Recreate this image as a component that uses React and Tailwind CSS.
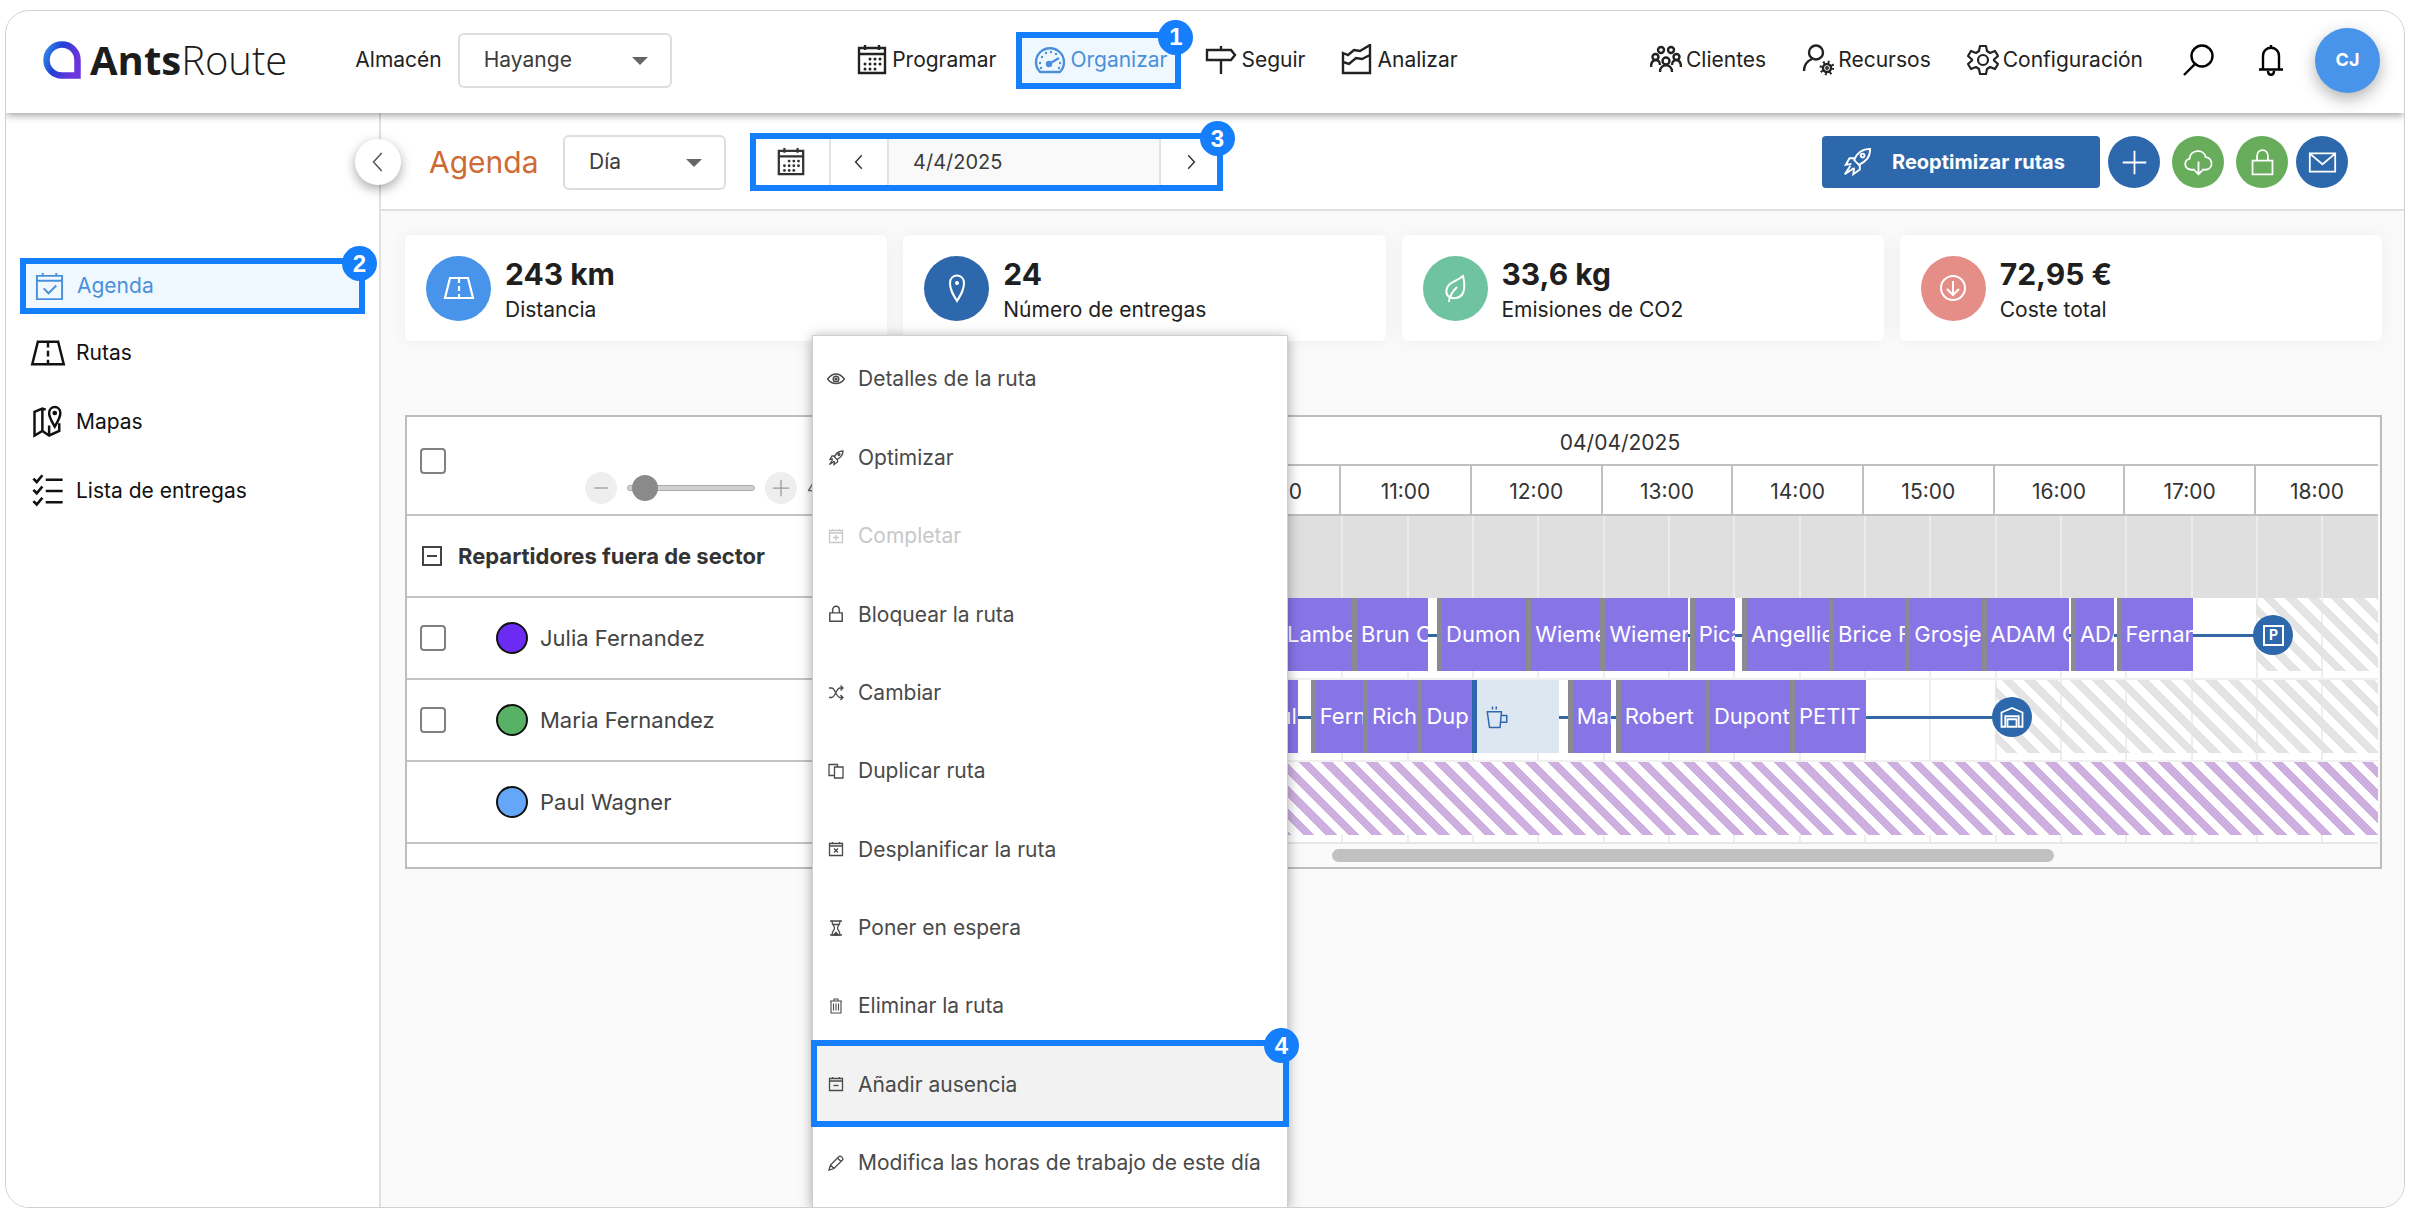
import React, { useState } from 'react'

// Timeline window, in minutes since midnight
const DAY_START = 440
const DAY_END = 1136
const SPAN = DAY_END - DAY_START

const toPercent = (minutes) => `${((minutes - DAY_START) / SPAN) * 100}%`
const toWidth = (from, to) => `${((to - from) / SPAN) * 100}%`

const HOURS = [7, 8, 9, 10, 11, 12, 13, 14, 15, 16, 17, 18]
const HALF_HOURS = Array.from({ length: 23 }, (_, i) => 450 + i * 30)

const JULIA_STOPS = [
  { from: 631, to: 665, label: 'Lambert' },
  { from: 665, to: 700, label: 'Brun C' },
  { from: 704, to: 745, label: 'Dumon' },
  { from: 745, to: 779, label: 'Wiemer' },
  { from: 779, to: 819, label: 'Wiemer' },
  { from: 820, to: 841, label: 'Picard' },
  { from: 844, to: 884, label: 'Angellier' },
  { from: 884, to: 919, label: 'Brice F' },
  { from: 919, to: 954, label: 'Grosjean' },
  { from: 954, to: 994, label: 'ADAM C' },
  { from: 995, to: 1015, label: 'ADAM' },
  { from: 1016, to: 1051, label: 'Fernan' },
]

const MARIA_STOPS = [
  { from: 615, to: 640, label: 'Paul' },
  { from: 646, to: 670, label: 'Fern' },
  { from: 670, to: 695, label: 'Rich' },
  { from: 695, to: 720, label: 'Dup' },
  { from: 720, to: 760, pause: true },
  { from: 764, to: 784, label: 'Mar' },
  { from: 786, to: 827, label: 'Robert' },
  { from: 827, to: 866, label: 'Dupont' },
  { from: 866, to: 901, label: 'PETIT A' },
]

/* ---------- Icons ---------- */

const Icon = ({ className = 'size-8', width = 2, children }) => (
  <svg
    className={`shrink-0 ${className}`}
    viewBox="0 0 32 32"
    fill="none"
    stroke="currentColor"
    strokeWidth={width}
    aria-hidden="true"
  >
    {children}
  </svg>
)

const Dots = ({ points, r = 1.3 }) =>
  points.map(([x, y]) => <circle key={`${x}-${y}`} cx={x} cy={y} r={r} fill="currentColor" stroke="none" />)

const CalendarIcon = (props) => (
  <Icon width={2.4} {...props}>
    <path d="M3 4h26v25H3zM3 10h26M9 1v5M23 1v5" />
    <Dots
      r={1.5}
      points={[
        [14, 15], [19, 15], [24, 15],
        [9, 20], [14, 20], [19, 20], [24, 20],
        [9, 25], [14, 25], [19, 25],
      ]}
    />
  </Icon>
)

const CalendarBase = ({ children, ...props }) => (
  <Icon {...props}>
    <path d="M3 5h26v24H3zM3 10h26M9 2v4M23 2v4" />
    {children}
  </Icon>
)

const GaugeIcon = (props) => (
  <Icon width={2.4} {...props}>
    <path d="M6 28a14 14 0 1 1 20 0z" strokeLinejoin="round" />
    <circle cx="15" cy="20" r="2" fill="currentColor" />
    <path d="M15 20l10-6" />
    <Dots points={[[6, 19], [8, 13], [12, 9], [17, 8], [22, 10], [26, 19], [7, 24], [25, 24]]} r={1.2} />
  </Icon>
)

const SignIcon = (props) => (
  <Icon width={2.4} {...props}>
    <path d="M16 2v3M2 6h24l4 5-4 5H2zM16 16v14" />
  </Icon>
)

const ChartIcon = (props) => (
  <Icon width={2.4} {...props}>
    <path d="M2 9l5 2 6-5 6 1 10-6v28H2zM2 18l6 2 7-6 6 1 8-4" />
  </Icon>
)

const PeopleIcon = (props) => (
  <Icon width={2.4} {...props}>
    <circle cx="11" cy="6" r="3" />
    <circle cx="21" cy="6" r="3" />
    <circle cx="5.500" cy="13" r="3" />
    <circle cx="26.500" cy="13" r="3" />
    <circle cx="16" cy="17" r="3.500" />
    <path d="M1 23c0-9 9-9 9-2M22 21c0-7 9-7 9 2M10 28c0-9 12-9 12 0" />
  </Icon>
)

const UserGearIcon = (props) => (
  <Icon width={2.4} {...props}>
    <circle cx="14" cy="8.500" r="7" />
    <path d="M2 27c0-7 3-10 8-12" />
    <circle cx="25" cy="24" r="4" />
    <circle cx="25" cy="24" r="6" strokeDasharray="1.800 2.912" strokeWidth="3" />
    <circle cx="25" cy="24" r="0.700" fill="currentColor" />
  </Icon>
)

const GearIcon = (props) => (
  <Icon width={2.2} {...props}>
    <circle cx="16" cy="16" r="5" />
    <path
      strokeLinejoin="round"
      d="M13 2h6l1 5 3 2 5-2 3 5-4 3.500v1L31 20l-3 5-5-2-3 2-1 5h-6l-1-5-3-2-5 2-3-5 4-3.500v-1L1 12l3-5 5 2 3-2z"
    />
  </Icon>
)

const SearchIcon = (props) => (
  <Icon width={2.4} {...props}>
    <circle cx="19" cy="12" r="10.500" />
    <path d="M12 20L1 31" />
  </Icon>
)

const BellIcon = (props) => (
  <Icon width={2.4} {...props}>
    <path d="M8 25V12c0-11 16-11 16 0v13M4 25.500h24M16 1v3M13 27c0 5 6 5 6 0" />
  </Icon>
)

const RoadIcon = (props) => (
  <Icon width={2.2} {...props}>
    <path d="M7 6h18l5 20H2zM16 6v5M16 14v5M16 22v4" />
  </Icon>
)

const MapIcon = (props) => (
  <Icon width={2.2} {...props}>
    <path d="M14 5l-3-1-7 3v21l7-4 6 4 9-4V17M11 4v20M17 19v9" />
    <path d="M22 20c-3-5-5-8-5-12 0-7 10-7 10 0 0 4-2 7-5 12z" />
    <circle cx="22" cy="8" r="1" fill="currentColor" />
  </Icon>
)

const ListIcon = (props) => (
  <Icon width={2.4} {...props}>
    <path d="M14 6h15M14 16h15M14 26h15M3 5l3 3 5-6M3 15l3 3 5-6M3 25l3 3 5-6" />
  </Icon>
)

const RocketIcon = (props) => (
  <Icon {...props}>
    <path d="M30 2c-9 0-14 4-17 12l5 5c8-4 12-8 12-17zM13 12H8l-4 7 6-1M19 19v5l-7 5 1-7M9 20l-6 9 9-6" />
    <circle cx="22" cy="9" r="2" />
  </Icon>
)

const LockIcon = (props) => (
  <Icon {...props}>
    <path d="M5 14h22v15H5zM10 14V9c0-9 12-9 12 0v5" />
  </Icon>
)

const CloudIcon = (props) => (
  <Icon {...props}>
    <path d="M12 24H8c-9-1-8-11-2-12 1-11 16-11 18-2 8 1 9 13 0 14h-4M16 15v14M12 25l4 4 4-4" />
  </Icon>
)

const MailIcon = (props) => (
  <Icon {...props}>
    <path d="M2 6h28v20H2zM3 7l13 11L29 7" />
  </Icon>
)

const PlusIcon = (props) => (
  <Icon {...props}>
    <path d="M16 3v26M3 16h26" />
  </Icon>
)

const ChevronLeftIcon = (props) => (
  <Icon width={2.6} {...props}>
    <path d="M21 4L10 16l11 12" />
  </Icon>
)

const ChevronRightIcon = (props) => (
  <Icon width={2.6} {...props}>
    <path d="M11 4l11 12-11 12" />
  </Icon>
)

const PinIcon = (props) => (
  <Icon {...props}>
    <path d="M16 29C11 21 9 17 9 11c0-10 14-10 14 0 0 6-2 10-7 18z" />
    <circle cx="16" cy="11" r="1" />
  </Icon>
)

const LeafIcon = (props) => (
  <Icon {...props}>
    <path d="M24 4c3 12 1 21-7 22-8 1-11-4-9-10C10 10 17 10 24 4zM10 30c0-6 3-10 8-15" />
  </Icon>
)

const ArrowDownIcon = (props) => (
  <Icon {...props}>
    <circle cx="16" cy="16" r="12" />
    <path d="M16 9v14M10 17l6 6 6-6" />
  </Icon>
)

const EyeIcon = (props) => (
  <Icon width={2.6} {...props}>
    <path d="M1 16c9-12 21-12 30 0-9 11-21 11-30 0z" />
    <circle cx="16" cy="16" r="5" />
    <circle cx="16" cy="16" r="1.500" fill="currentColor" />
  </Icon>
)

const ShuffleIcon = (props) => (
  <Icon {...props}>
    <path d="M2 6h5c8 0 9 19 17 19h5M2 25h5c8 0 9-19 17-19h5M25 1l5 5-5 5M25 20l5 5-5 5" />
  </Icon>
)

const CopyIcon = (props) => (
  <Icon {...props}>
    <path d="M13 8h17v22H13zM13 25H2V3h17v5" />
  </Icon>
)

const HourglassIcon = (props) => (
  <Icon {...props}>
    <path d="M4 2h24M4 30h24M8 2c0 9 5 9 5 14s-5 5-5 14M24 2c0 9-5 9-5 14s5 5 5 14M11 9h10" />
    <path d="M11 30l5-5 5 5z" fill="currentColor" />
  </Icon>
)

const TrashIcon = (props) => (
  <Icon {...props}>
    <path d="M4 6h24M6 6v24h20V6M12 6V2h8v4M11 11v14M16 11v14M21 11v14" />
  </Icon>
)

const PencilIcon = (props) => (
  <Icon {...props}>
    <path d="M2 30l3-10L22 3c3-3 10 4 7 7L12 27zM5 20l7 7M19 6l7 7" />
  </Icon>
)

const CupIcon = (props) => (
  <Icon {...props}>
    <path d="M3 9h19l-2 21H6zM22 14h7v9h-8M10 6V2M15 6V2" strokeLinejoin="round" />
  </Icon>
)

const WarehouseIcon = (props) => (
  <Icon {...props}>
    <path d="M2 29V10l14-6 14 6v19h-5V15H7v14zM10 29V19h12v10z" />
  </Icon>
)

const Logo = () => (
  <a href="#inicio" className="flex items-center gap-2 text-[#1c1c1c]">
    <svg viewBox="0 0 40 40" className="size-10 shrink-0" aria-hidden="true">
      <defs>
        <linearGradient id="logo" x1="0" y1="0" x2="1" y2="0.400">
          <stop offset="0" stopColor="#2f8de6" />
          <stop offset="0.450" stopColor="#2340d8" />
          <stop offset="1" stopColor="#6a35dc" />
        </linearGradient>
      </defs>
      <path
        d="M20 4.500a15.500 15.500 0 1 0 0 31h15.500V20A15.500 15.500 0 0 0 20 4.500z"
        fill="none"
        stroke="url(#logo)"
        strokeWidth="6.500"
      />
    </svg>
    <span className="font-['Open_Sans',sans-serif] text-[40px] leading-none font-light">
      <b className="font-bold">Ants</b>Route
    </span>
  </a>
)

/* ---------- Small parts ---------- */

const Badge = ({ className, children }) => (
  <span
    className={`absolute z-20 flex size-[35px] items-center justify-center rounded-full bg-[#147efb] font-['Liberation_Sans',sans-serif] text-2xl font-bold text-white ${className}`}
  >
    {children}
  </span>
)

const Select = ({ id, value, label, className }) => (
  <div className={`relative ${className}`}>
    <select
      id={id}
      aria-label={label}
      defaultValue={value}
      className="h-[55px] w-full appearance-none rounded-md border-2 border-[#dedede] bg-white px-6 text-[21px] text-[#3c3c3c]"
    >
      <option>{value}</option>
    </select>
    <svg viewBox="0 0 16 8" className="pointer-events-none absolute top-6 right-6 h-2 w-4 fill-[#666]" aria-hidden="true">
      <path d="M0 0h16l-8 8z" />
    </svg>
  </div>
)

const NavLink = ({ icon: NavIcon, label, href }) => (
  <a href={href} className="flex items-center gap-1 text-[21px] text-[#222]">
    <NavIcon />
    {label}
  </a>
)

const CheckBox = ({ label, className = '' }) => (
  <input
    type="checkbox"
    aria-label={label}
    className={`size-[26px] shrink-0 appearance-none rounded-sm border-2 border-[#808080] bg-white ${className}`}
  />
)

const RoundButton = ({ icon: ButtonIcon, label, className }) => (
  <button
    type="button"
    aria-label={label}
    className={`flex size-[52px] items-center justify-center rounded-full text-white ${className}`}
  >
    <ButtonIcon className="size-[29px]" />
  </button>
)

/* ---------- Page sections ---------- */

const Header = () => (
  <header className="relative z-10 flex h-[102px] shrink-0 items-center justify-between bg-white pr-6 pb-1 pl-9 shadow-[0_2px_8px_rgba(0,0,0,0.4)]">
    <div className="flex items-center">
      <Logo />
      <label htmlFor="warehouse" className="ml-[68px] text-[21px] text-[#222]">
        Almacén
      </label>
      <Select id="warehouse" value="Hayange" className="ml-4 w-[214px]" />
    </div>

    <nav className="mr-2 flex items-center">
      <NavLink icon={CalendarIcon} label="Programar" href="#programar" />
      <div className="relative mr-6 ml-5">
        <a
          href="#organizar"
          className="flex h-[57px] items-center gap-1 border-[6px] border-[#147efb] bg-[#f0f8ff] pr-2 pl-3 text-[21px] text-[#4a90d9]"
        >
          <GaugeIcon />
          Organizar
        </a>
        <Badge className="-top-3 -right-3">1</Badge>
      </div>
      <NavLink icon={SignIcon} label="Seguir" href="#seguir" />
      <div className="ml-9">
        <NavLink icon={ChartIcon} label="Analizar" href="#analizar" />
      </div>
    </nav>

    <div className="flex items-center gap-9">
      <NavLink icon={PeopleIcon} label="Clientes" href="#clientes" />
      <NavLink icon={UserGearIcon} label="Recursos" href="#recursos" />
      <NavLink icon={GearIcon} label="Configuración" href="#configuracion" />
      <button type="button" aria-label="Buscar" className="mr-1 ml-1">
        <SearchIcon />
      </button>
      <button type="button" aria-label="Notificaciones">
        <BellIcon />
      </button>
      <button
        type="button"
        className="-ml-2 size-[65px] rounded-full bg-[#4894eb] text-lg font-bold text-white shadow-[0_6px_16px_rgba(0,0,0,0.3)]"
      >
        CJ
      </button>
    </div>
  </header>
)

const SidebarLink = ({ icon: LinkIcon, label, href }) => (
  <a href={href} className="flex h-[69px] items-center gap-[10px] pl-6 text-[21px] text-[#111]">
    <LinkIcon className="size-9" />
    {label}
  </a>
)

const Sidebar = () => (
  <aside className="relative w-[375px] shrink-0 border-r-2 border-[#e0e0e0] bg-white pt-[145px]">
    <button
      type="button"
      aria-label="Contraer menú"
      className="absolute top-[26px] -right-[22px] z-10 flex size-[46px] items-center justify-center rounded-full bg-white text-[#555] shadow-[0_4px_12px_rgba(0,0,0,0.35)]"
    >
      <ChevronLeftIcon className="size-6" width={2} />
    </button>
    <nav>
      <div className="relative mx-[14px] mb-1">
        <a
          href="#agenda"
          className="flex h-14 items-center gap-3 border-[6px] border-[#147efb] bg-[#f0f8ff] pl-2 text-[21px] text-[#4a90d9]"
        >
          <CalendarBase className="size-[31px]">
            <path d="M10 18l5 5 8-8" />
          </CalendarBase>
          Agenda
        </a>
        <Badge className="-top-3 -right-3">2</Badge>
      </div>
      <SidebarLink icon={RoadIcon} label="Rutas" href="#rutas" />
      <SidebarLink icon={MapIcon} label="Mapas" href="#mapas" />
      <SidebarLink icon={ListIcon} label="Lista de entregas" href="#entregas" />
    </nav>
  </aside>
)

const Toolbar = () => (
  <div className="flex h-[98px] items-center border-b-2 border-[#e0e0e0] bg-white pt-[2px] pr-14 pl-12">
    <h1 className="w-[134px] text-[30px] text-[#cf6a35]">Agenda</h1>
    <Select id="range" label="Periodo" value="Día" className="w-[163px]" />

    <div className="relative ml-6">
      <div className="flex h-[58px] w-[473px] border-[6px] border-[#147efb] bg-white text-[#333]">
        <button type="button" aria-label="Calendario" className="flex w-[73px] items-center justify-center pr-1">
          <CalendarIcon className="size-[30px]" />
        </button>
        <button type="button" aria-label="Día anterior" className="flex w-[60px] items-center justify-center border-x-2 border-[#e3e3e3]">
          <ChevronLeftIcon className="size-[18px]" />
        </button>
        <input
          type="text"
          aria-label="Fecha"
          defaultValue="4/4/2025"
          className="min-w-0 flex-1 border-r-2 border-[#e3e3e3] bg-[#f9f9f9] pl-6 text-[20px] text-[#3c3c3c]"
        />
        <button type="button" aria-label="Día siguiente" className="flex w-14 items-center justify-center pl-1">
          <ChevronRightIcon className="size-[18px]" />
        </button>
      </div>
      <Badge className="-top-3 -right-3">3</Badge>
    </div>

    <div className="ml-auto flex items-center gap-2">
      <button
        type="button"
        className="flex h-[52px] w-[278px] items-center gap-5 rounded-sm bg-[#2d68ac] pl-5 text-[20px] font-bold text-white"
      >
        <RocketIcon className="size-[30px]" />
        Reoptimizar rutas
      </button>
      <RoundButton icon={PlusIcon} label="Añadir" className="bg-[#2d68ac]" />
      <RoundButton icon={CloudIcon} label="Descargar" className="mx-1 bg-[#68ad5c]" />
      <RoundButton icon={LockIcon} label="Bloquear" className="bg-[#68ad5c]" />
      <RoundButton icon={MailIcon} label="Enviar" className="bg-[#2d68ac]" />
    </div>
  </div>
)

const StatCard = ({ icon: StatIcon, value, label, color }) => (
  <div className="flex h-[106px] items-center gap-[14px] rounded-md bg-white pl-[21px] shadow-[0_0_20px_rgba(0,0,0,0.05)]">
    <div className={`flex size-[65px] items-center justify-center rounded-full text-white ${color}`}>
      <StatIcon className="size-8" />
    </div>
    <div className="pt-2">
      <p className="text-[30px] leading-9 font-bold text-[#1f1f1f]">{value}</p>
      <p className="text-[21px] leading-9 text-[#222]">{label}</p>
    </div>
  </div>
)

const Stop = ({ from, to, label, pause }) => (
  <div
    className={`absolute top-0 flex h-[73px] items-center overflow-hidden border-l-[5px] pl-1 text-[22px] whitespace-nowrap text-white ${
      pause ? 'border-[#2d68ac] bg-[#dde7f1]' : 'border-[#8a8a93] bg-[#8775e6]'
    }`}
    style={{ left: toPercent(from), width: toWidth(from, to) }}
  >
    {pause ? <CupIcon className="ml-1 size-6 text-[#2d68ac]" /> : label}
  </div>
)

const Stripes = ({ from = DAY_START, color }) => (
  <div className={`absolute top-0 right-0 h-[73px] ${color}`} style={{ left: toPercent(from) }} />
)

const GridLines = ({ color }) =>
  HALF_HOURS.map((minute) => (
    <div key={minute} className={`absolute inset-y-0 w-[2px] ${color}`} style={{ left: toPercent(minute) }} />
  ))

const Track = ({ stops, until, workEnd, children }) => (
  <div className="relative h-[82px] overflow-hidden border-b-2 border-[#f0f0f0] bg-white">
    <GridLines color="bg-[#eeeeee]" />
    <Stripes from={workEnd} color="bg-[repeating-linear-gradient(45deg,transparent_0_8px,#e4e4e4_8px_16px)]" />
    <div
      className="absolute top-[36px] h-[3px] bg-[#3468a5]"
      style={{ left: toPercent(stops[0].from), width: toWidth(stops[0].from, until) }}
    />
    {stops.map((stop) => (
      <Stop key={stop.from} {...stop} />
    ))}
    <div
      className="absolute top-[17px] flex size-10 -translate-x-1/2 items-center justify-center rounded-full bg-[#2d68ac] text-white"
      style={{ left: toPercent(until) }}
    >
      {children}
    </div>
  </div>
)

const Timeline = () => (
  <div className="flex min-w-0 flex-1 flex-col pr-[2px]">
    <div className="flex h-[49px] items-center justify-center border-b-2 border-[#c0c0c0] bg-white pt-1 text-[21px] text-[#333]">
      04/04/2025
    </div>
    <div className="flex h-[50px] border-b-2 border-[#c0c0c0] bg-white text-[21px] text-[#333]">
      {HOURS.map((hour) => {
        const from = Math.max(hour * 60, DAY_START)
        const to = Math.min(hour * 60 + 60, DAY_END)
        return (
          <div
            key={hour}
            className="flex items-center justify-center overflow-hidden border-r-2 border-[#c0c0c0] pt-1 last:border-r-0"
            style={{ width: toWidth(from, to) }}
          >
            {`${String(hour).padStart(2, '0')}:00`}
          </div>
        )
      })}
    </div>

    <div className="relative h-[82px] bg-[#dfdfdf]">
      <GridLines color="bg-[#ececec]" />
    </div>
    <Track stops={JULIA_STOPS} until={1088} workEnd={1080}>
      <span className="flex size-[21px] items-center justify-center border-2 border-white text-sm font-bold">P</span>
    </Track>
    <Track stops={MARIA_STOPS} until={968} workEnd={960}>
      <WarehouseIcon className="size-6" width={2.4} />
    </Track>
    <div className="relative h-[82px] border-b-2 border-[#e6e6e6] bg-white">
      <GridLines color="bg-[#eeeeee]" />
      <div className="absolute inset-x-0 top-0 h-[73px] bg-white" />
      <Stripes color="bg-[repeating-linear-gradient(45deg,transparent_0_8px,#ceb0e0_8px_16px)]" />
    </div>

    <div className="flex h-[23px] items-center bg-[#fafafa]">
      <div className="ml-[31%] h-[13px] w-[722px] rounded-full bg-[#c1c1c1]" />
    </div>
  </div>
)

const DriverRow = ({ name, color, selectable = true }) => (
  <div className="flex h-[82px] items-center border-b-2 border-[#c4c4c4] pl-[13px] text-[22px] text-[#444]">
    {selectable ? <CheckBox label={name} /> : <span className="w-[26px]" />}
    <span className={`mr-3 ml-[50px] size-8 rounded-full border-2 border-[#111] ${color}`} />
    {name}
  </div>
)

const DriverColumn = () => {
  const [zoom, setZoom] = useState(4)

  return (
    <div className="w-[455px] shrink-0 bg-white">
      <div className="flex h-[99px] items-start border-b-2 border-[#c4c4c4] pl-[13px]">
        <CheckBox label="Seleccionar todo" className="mt-[31px]" />
        <div className="mt-[55px] ml-[139px] flex items-center gap-[10px] text-[#999]">
          <button type="button" aria-label="Alejar" className="flex size-8 items-center justify-center rounded-full bg-[#eee]">
            <Icon className="size-5">
              <path d="M5 16h22" />
            </Icon>
          </button>
          <input
            type="range"
            aria-label="Zoom"
            min="0"
            max="100"
            value={zoom}
            onChange={(e) => setZoom(Number(e.target.value))}
            className="h-[6px] w-[128px] appearance-none rounded-full border border-[#aaa] bg-[#d0d0d0] [&::-webkit-slider-thumb]:size-[26px] [&::-webkit-slider-thumb]:appearance-none [&::-webkit-slider-thumb]:rounded-full [&::-webkit-slider-thumb]:bg-[#8a8a8a]"
          />
          <button type="button" aria-label="Acercar" className="flex size-8 items-center justify-center rounded-full bg-[#eee]">
            <PlusIcon className="size-5" />
          </button>
          <span className="text-base text-[#666]">{zoom}</span>
        </div>
      </div>

      <div className="flex h-[82px] items-center gap-4 border-b-2 border-[#c4c4c4] pl-[15px] text-[22px] font-bold text-[#333]">
        <button type="button" aria-label="Contraer grupo" className="flex size-5 items-center justify-center border-2 border-[#444]">
          <span className="h-[2px] w-[10px] bg-[#444]" />
        </button>
        Repartidores fuera de sector
      </div>
      <DriverRow name="Julia Fernandez" color="bg-[#6c2bf2]" />
      <DriverRow name="Maria Fernandez" color="bg-[#57b265]" />
      <DriverRow name="Paul Wagner" color="bg-[#64a6f7]" selectable={false} />
    </div>
  )
}

const MENU_ITEMS = [
  { label: 'Detalles de la ruta', icon: <EyeIcon className="size-[18px]" /> },
  { label: 'Optimizar', icon: <RocketIcon className="size-4" width={2.6} /> },
  {
    label: 'Completar',
    disabled: true,
    icon: (
      <CalendarBase className="size-4" width={2.6}>
        <path d="M16 14v11M10 19h12" />
      </CalendarBase>
    ),
  },
  { label: 'Bloquear la ruta', icon: <LockIcon className="size-[18px]" width={2.6} /> },
  { label: 'Cambiar', icon: <ShuffleIcon className="size-4" width={2.6} /> },
  { label: 'Duplicar ruta', icon: <CopyIcon className="size-4" width={2.6} /> },
  {
    label: 'Desplanificar la ruta',
    icon: (
      <CalendarBase className="size-4" width={2.6}>
        <path d="M12 15l8 8M20 15l-8 8" />
      </CalendarBase>
    ),
  },
  { label: 'Poner en espera', icon: <HourglassIcon className="size-4" width={2.6} /> },
  { label: 'Eliminar la ruta', icon: <TrashIcon className="size-4" width={2.2} /> },
  {
    label: 'Añadir ausencia',
    active: true,
    icon: (
      <CalendarBase className="size-4" width={2.6}>
        <path d="M11 19h10" />
      </CalendarBase>
    ),
  },
  { label: 'Modifica las horas de trabajo de este día', icon: <PencilIcon className="size-4" width={2.6} /> },
]

const ContextMenu = () => (
  <div
    role="menu"
    className="absolute top-[324px] bottom-0 left-[806px] z-10 flex w-[476px] flex-col border border-b-0 border-[#d0d0d0] bg-white pt-1 pb-[5px] shadow-[0_2px_12px_rgba(0,0,0,0.35)]"
  >
    {MENU_ITEMS.map(({ label, icon, active, disabled }) => (
      <div key={label} className="relative flex-1">
        <button
          type="button"
          role="menuitem"
          disabled={disabled}
          className={`flex h-full w-full items-center text-[21px] ${active ? 'bg-[#f2f2f2]' : ''} ${
            disabled ? 'text-[#c8c8c8]' : 'text-[#4a4a4a]'
          }`}
        >
          <span className="flex w-[45px] justify-center">{icon}</span>
          {label}
        </button>
        {active && (
          <>
            <div className="pointer-events-none absolute -inset-x-[2px] -top-[5px] -bottom-[3px] border-[6px] border-[#147efb]" />
            <Badge className="-top-[17px] -right-3">4</Badge>
          </>
        )}
      </div>
    ))}
  </div>
)

const App = () => (
  <div className="min-h-screen bg-white px-[5px] pt-[10px] pb-[9px] font-['Inter',sans-serif]">
    <div className="relative flex min-h-[calc(100vh-19px)] flex-col overflow-hidden rounded-3xl border border-[#d0d0d0]">
      <Header />
      <div className="flex flex-1">
        <Sidebar />
        <main className="min-w-0 flex-1 bg-[#fafafa]">
          <Toolbar />
          <section className="grid grid-cols-4 gap-4 pt-6 pr-[22px] pl-6">
            <StatCard icon={RoadIcon} value="243 km" label="Distancia" color="bg-[#4894eb]" />
            <StatCard icon={PinIcon} value="24" label="Número de entregas" color="bg-[#2d68ac]" />
            <StatCard icon={LeafIcon} value="33,6 kg" label="Emisiones de CO2" color="bg-[#6fc3a0]" />
            <StatCard icon={ArrowDownIcon} value="72,95 €" label="Coste total" color="bg-[#e58e87]" />
          </section>
          <section className="mt-[74px] mr-[22px] ml-6 flex border-2 border-[#bdbdbd]">
            <DriverColumn />
            <Timeline />
          </section>
        </main>
      </div>
      <ContextMenu />
    </div>
  </div>
)

export default App
